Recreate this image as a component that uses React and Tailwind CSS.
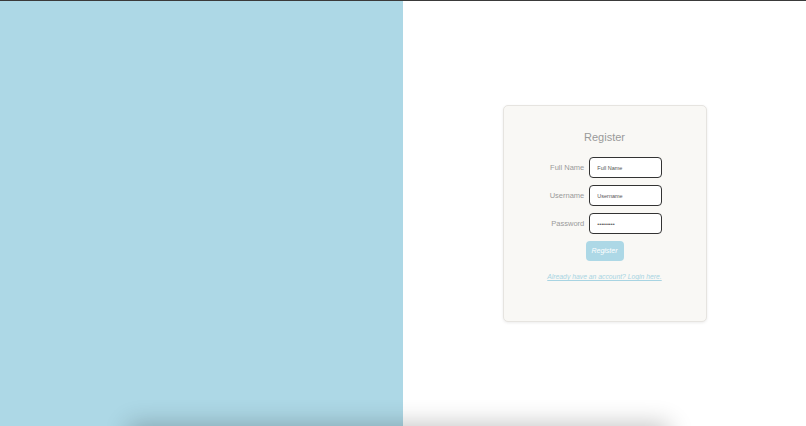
export default function App() {
  const fields = [
    { label: 'Full Name', placeholder: 'Full Name' },
    { label: 'Username', placeholder: 'Username' },
    { label: 'Password', placeholder: '•••••••••' },
  ];

  return (
    <div className="h-[426px] w-full overflow-hidden bg-white" style={{ fontFamily: '"Liberation Sans", Arial, sans-serif' }}>
      <div className="h-px w-full bg-[#3a3a3a]" />
      <div className="flex h-[425px] w-full">
        <div className="w-[403px] shrink-0 bg-[#add8e6]" />
        <div className="flex flex-1 items-center justify-center">
          <div className="flex h-[217px] w-[204px] flex-col items-center rounded-[5px] border border-[#e6e4e0] bg-[#f9f8f5] pt-[26px] shadow-[0_1px_3px_rgba(0,0,0,0.08)]">
            <h1 className="text-[11px] font-light leading-none text-[#9a9a9a]">Register</h1>
            <form className="mt-[14px] grid grid-cols-[auto_auto] items-center gap-x-[5px] gap-y-[7px] pl-[3px]">
              {fields.map((f) => (
                <div key={f.label} className="contents">
                  <label className="text-right text-[7.5px] text-[#9a9a9a]">{f.label}</label>
                  <input
                    type="text"
                    placeholder={f.placeholder}
                    className="h-[21px] w-[73px] rounded-[4px] border border-[#333] bg-white px-[7px] text-[5.5px] text-[#444] placeholder:text-[#555] outline-none"
                  />
                </div>
              ))}
            </form>
            <button type="button" className="mt-[7px] h-[20px] w-[38px] rounded-[4px] bg-[#add8e6] text-[7px] italic text-white">
              Register
            </button>
            <a href="#" className="mt-[11px] text-[6.8px] italic text-[#a8d4e2] underline">
              Already have an account? Login here.
            </a>
          </div>
        </div>
      </div>
      <div className="mx-auto h-10 w-[540px] -translate-x-[4px] bg-white shadow-[0_-2px_24px_rgba(0,0,0,0.24)]" />
    </div>
  );
}
